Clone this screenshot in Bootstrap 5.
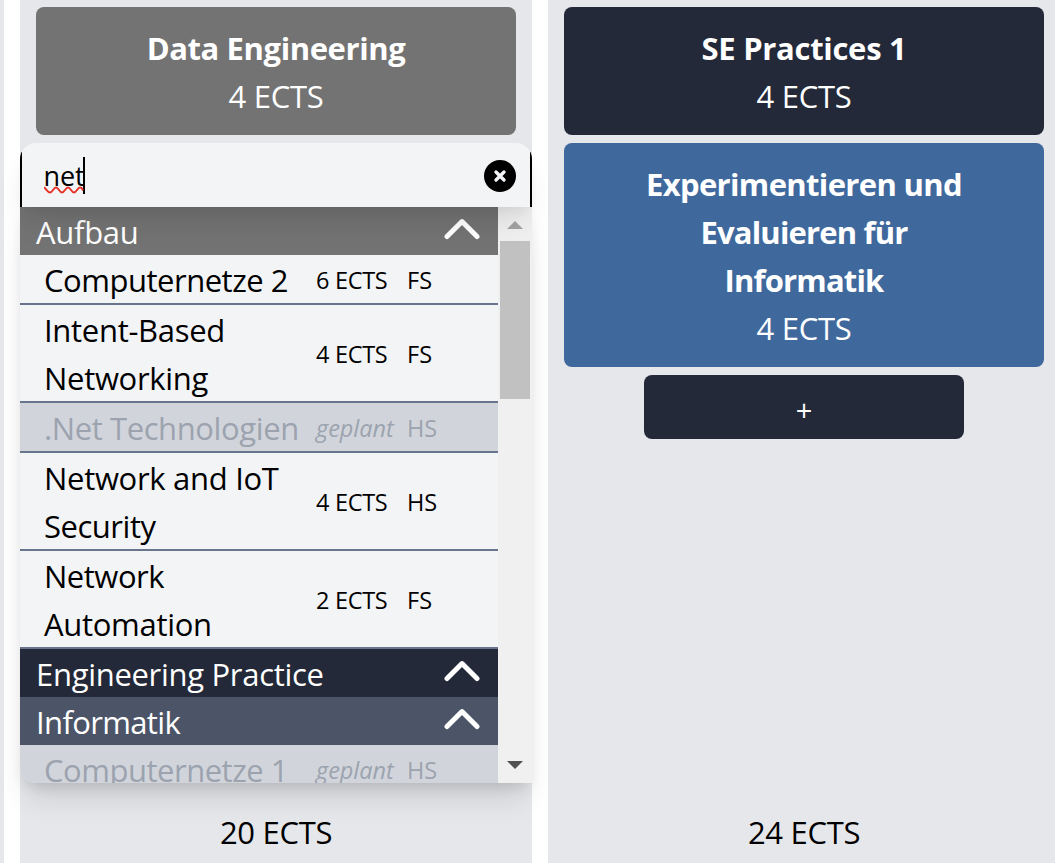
<!DOCTYPE html>
<html lang="de">
<head>
<meta charset="utf-8">
<meta name="viewport" content="width=device-width, initial-scale=1">
<title>Studienplan</title>
<link href="https://cdn.jsdelivr.net/npm/bootstrap@5.3.0/dist/css/bootstrap.min.css" rel="stylesheet">
<style>
  body { font: 400 31px/48px "Open Sans", "Noto Sans", sans-serif; letter-spacing: -.3px; color: #000; background: #fff; }
  .board { height: 863px; gap: 16px; margin-left: -508px; }
  .semester { flex: 0 0 512px; background: #e5e7eb; padding: 7px 16px; gap: 8px; }
  .module { border-radius: 8px; padding: 17px 64px 15px; color: #fff; text-align: center; }
  .module strong { display: block; font-weight: 700; }
  .tone-gray { background: #737373; }
  .tone-navy { background: #232938; }
  .tone-blue { background: #3f699d; }
  .tone-slate { background: #4c5467; }
  .add-module { width: 320px; height: 64px; border: 0; border-radius: 8px; color: #fff; font-size: 29px; line-height: 70px; padding: 0; }
  .picker { margin: 0 -16px; }
  .search { position: relative; z-index: 2; height: 64px; padding: 2px 16px 0 24px; border-radius: 16px 16px 0 0; background: linear-gradient(#000, #000) 0 9px / 2px 100% no-repeat, linear-gradient(#000, #000) 100% 9px / 2px 100% no-repeat, #f3f4f6; box-shadow: 0 20px 30px -6px rgba(0,0,0,.1), 0 8px 12px -4px rgba(0,0,0,.05); font-size: 27px; letter-spacing: -.1px; }
  .query { position: relative; line-height: 36px; margin-left: -.5px; }
  .squiggle { position: absolute; left: 0; top: 28px; }
  .caret { width: 2px; height: 37px; background: #000; margin: -1px 0 0 -2px; }
  .results { height: 576px; overflow: hidden; background: #f3f4f6; border-radius: 0 0 0 16px; box-shadow: 0 20px 30px -6px rgba(0,0,0,.12), 0 8px 14px -4px rgba(0,0,0,.11); }
  .group-head { height: 48px; color: #fff; padding: 1px 18px 0 16px; }
  .entry { border-bottom: 2px solid #69758c; padding-left: 24px; }
  .entry > * { margin: 1px 0 -1px; }
  .entry .title { width: 272px; }
  .entry .credits { width: 91px; font-size: 23.5px; }
  .entry .term { font-size: 23.5px; letter-spacing: 0; }
  .planned { background: #d1d5db; color: #9ca3af; }
  .planned .credits { font-style: italic; letter-spacing: -.05px; }
  .scroller { flex: 0 0 34px; background: #f0f0f0; }
  .thumb { width: 30px; height: 158px; background: #c1c1c1; margin: 12px 2px 0; }
  .t-mid { letter-spacing: -.4px; }
  .t-snug { letter-spacing: -.48px; }
  .t-tight { letter-spacing: -.64px; }
  .t-tighter { letter-spacing: -.82px; }
</style>
</head>
<body class="overflow-hidden">
<svg class="d-none">
  <symbol id="chevron" viewBox="0 0 36 22"><path d="M3 18.500 18 3.600 33 18.500" fill="none" stroke="#fff" stroke-width="5" stroke-linecap="round" stroke-linejoin="round"/></symbol>
</svg>
<main class="board d-flex">
  <section class="semester"></section>

  <section class="semester d-flex flex-column">
    <div class="module tone-gray"><strong class="t-mid">Data Engineering</strong>4 ECTS</div>
    <div class="picker">
      <div class="search d-flex align-items-center justify-content-between">
        <div class="query d-flex"><span>net</span><span class="caret"></span>
          <svg class="squiggle" width="41" height="8" viewBox="0 0 41 8"><path d="M0 1.500C1.500 1.500 3.500 6.500 6 6.500S9.500 1.500 12 1.500 15.500 6.500 18 6.500 21.500 1.500 24 1.500 27.500 6.500 30 6.500 33.500 1.500 36 1.500 38 3 39 4.500" fill="none" stroke="#e5352b" stroke-width="2"/></svg>
        </div>
        <svg width="32" height="32" viewBox="0 0 32 32"><circle cx="16" cy="16" r="16"/><path d="m12 12 8 8m0-8-8 8" stroke="#f3f4f6" stroke-width="3.400" stroke-linecap="round"/></svg>
      </div>
      <div class="results d-flex">
        <div class="flex-fill">
          <div class="group-head tone-gray d-flex justify-content-between"><span>Aufbau</span><svg class="mt-2" width="36" height="26"><use href="#chevron"/></svg></div>
          <div class="entry d-flex align-items-center"><span class="title t-snug">Computernetze 2</span><span class="credits">6 ECTS</span><span class="term">FS</span></div>
          <div class="entry d-flex align-items-center"><span class="title">Intent-Based<br>Networking</span><span class="credits">4 ECTS</span><span class="term">FS</span></div>
          <div class="entry planned d-flex align-items-center"><span class="title t-mid">.Net Technologien</span><span class="credits">geplant</span><span class="term">HS</span></div>
          <div class="entry d-flex align-items-center"><span class="title">Network and IoT<br><span class="t-snug">Security</span></span><span class="credits">4 ECTS</span><span class="term">HS</span></div>
          <div class="entry d-flex align-items-center"><span class="title"><span class="t-snug">Network</span><br>Automation</span><span class="credits">2 ECTS</span><span class="term">FS</span></div>
          <div class="group-head tone-navy d-flex justify-content-between"><span>Engineering Practice</span><svg class="mt-2" width="36" height="26"><use href="#chevron"/></svg></div>
          <div class="group-head tone-slate d-flex justify-content-between"><span class="t-tight">Informatik</span><svg class="mt-2" width="36" height="26"><use href="#chevron"/></svg></div>
          <div class="entry planned d-flex align-items-center"><span class="title t-snug">Computernetze 1</span><span class="credits">geplant</span><span class="term">HS</span></div>
        </div>
        <div class="scroller d-flex flex-column">
          <svg class="d-block" width="34" height="22"><path d="M9 22 17 14 25 22z" fill="#a3a3a3"/></svg>
          <div class="thumb"></div>
          <svg class="d-block mt-auto" width="34" height="22"><path d="M9 0h16l-8 8z" fill="#505050"/></svg>
        </div>
      </div>
    </div>
    <div class="mt-auto text-center">20 ECTS</div>
  </section>

  <section class="semester d-flex flex-column">
    <div class="module tone-navy"><strong>SE Practices 1</strong>4 ECTS</div>
    <div class="module tone-blue"><strong class="t-tight">Experimentieren und</strong><strong class="t-tighter">Evaluieren für</strong><strong class="t-tighter">Informatik</strong>4 ECTS</div>
    <button type="button" class="add-module tone-navy align-self-center">+</button>
    <div class="mt-auto text-center">24 ECTS</div>
  </section>
</main>
<script src="https://cdn.jsdelivr.net/npm/bootstrap@5.3.0/dist/js/bootstrap.bundle.min.js"></script>
</body>
</html>
